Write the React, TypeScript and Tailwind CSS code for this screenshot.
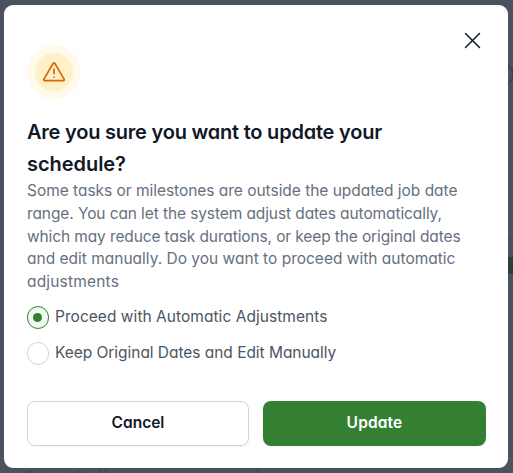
import { useState } from "react";

const TITLE = [
  { text: "Are you sure you want to update your", cls: "tracking-[-0.22px]" },
  { text: "schedule?", cls: "tracking-[-0.05px]" },
];

const MESSAGE = [
  { text: "Some tasks or milestones are outside the updated job date", cls: "tracking-[-0.03px]" },
  { text: "range. You can let the system adjust dates automatically,", cls: "tracking-[-0.1px]" },
  { text: "which may reduce task durations, or keep the original dates", cls: "tracking-[-0.12px]" },
  { text: "and edit manually. Do you want to proceed with automatic", cls: "tracking-[0px]" },
  { text: "adjustments", cls: "tracking-[0.18px]" },
];

const OPTIONS = [
  { id: "auto", label: "Proceed with Automatic Adjustments", cls: "pb-0.5 tracking-[0.04px]" },
  { id: "manual", label: "Keep Original Dates and Edit Manually", cls: "pb-0.5 tracking-[-0.04px]" },
];

function WarningBadge() {
  return (
    <div className="flex size-[54px] items-center justify-center rounded-full bg-[#fffaeb]">
      <div className="flex size-[38px] items-center justify-center rounded-full bg-[#fef0c7]">
        <svg width="22" height="20" viewBox="0 0 22 20" fill="none" stroke="#dc6803" strokeWidth="1.7" strokeLinecap="round" strokeLinejoin="round">
          <path d="M10.1 1.5.9 17.1a1 1 0 0 0 .9 1.6h18.4a1 1 0 0 0 .9-1.6L11.9 1.5a1 1 0 0 0-1.8 0Z" />
          <path d="M11 7v4.6M11 15v.1" />
        </svg>
      </div>
    </div>
  );
}

// dimmed page showing around the edges of the dialog
function Backdrop() {
  return (
    <div className="absolute inset-0 flex flex-col justify-between bg-[#4b525e]">
      <div className="flex justify-between">
        <div className="h-[37px] w-1 border-b border-[#404752]" />
        <div className="flex w-[5px] flex-col overflow-hidden">
          <div className="h-[37px] border-b border-[#404752]" />
          <div className="h-[15px] border-b border-[#404752]" />
          <div className="mt-[13px] -ml-4 h-[19px] w-[22px] rounded-lg border-2 border-[#3b424e]" />
          <div className="h-4 border-b border-[#404752]" />
          <div className="h-[139px] border-b border-[#404752]" />
          <div className="mt-[18px] h-[17px] bg-[#293f38]" />
          <div className="h-[19px] border-b border-[#404752]" />
        </div>
      </div>
      <div className="flex h-[5px] pl-[25px] text-[15px] leading-[18px] text-[#404650]">
        <span className="w-[232px]">Select Staff</span>
        <div className="w-px bg-[#383e49]" />
      </div>
    </div>
  );
}

export default function App() {
  const [choice, setChoice] = useState("auto");

  return (
    <div className="relative h-[473px] w-[513px] overflow-hidden px-1 pt-[5px] font-['Inter',sans-serif] [font-feature-settings:'cv11']">
      <Backdrop />

      <div role="dialog" className="relative h-[463px] w-[504px] rounded-[9px] bg-white pt-10 pr-[22px] pl-[23px]">
        <div className="flex items-start justify-between">
          <WarningBadge />
          <button aria-label="Close" className="-mt-[18px] p-[5px]">
            <svg width="17" height="17" viewBox="0 0 17 17" stroke="#111827" strokeWidth="1.5" strokeLinecap="round">
              <path d="M1.5 1.5l14 14M15.5 1.5l-14 14" />
            </svg>
          </button>
        </div>

        <h2 className="mt-[17px] text-[20px] leading-8 font-semibold whitespace-nowrap text-[#111827]">
          {TITLE.map((l) => (
            <span key={l.text} className="block">
              <span className={l.cls}>{l.text}</span>
            </span>
          ))}
        </h2>
        <p className="text-[15.5px] leading-[22.75px] whitespace-nowrap text-[#667080]">
          {MESSAGE.map((l) => (
            <span key={l.text} className="block">
              <span className={l.cls}>{l.text}</span>
            </span>
          ))}
        </p>

        <div className="mt-[12.25px] flex flex-col gap-[13px]">
          {OPTIONS.map((o) => (
            <button
              key={o.id}
              role="radio"
              aria-checked={choice === o.id}
              onClick={() => setChoice(o.id)}
              className="flex h-[23px] items-center gap-1.5 text-[15.5px] whitespace-nowrap text-[#4b5563]"
            >
              <span
                className={
                  choice === o.id
                    ? "flex h-[23px] w-[22px] items-center justify-center rounded-full border border-[#338033] bg-[#f2f9f2]"
                    : "h-[23px] w-[22px] rounded-full border border-[#d1d5db]"
                }
              >
                {choice === o.id && <span className="mr-px size-[9px] rounded-full bg-[#338033]" />}
              </span>
              <span className={o.cls}>{o.label}</span>
            </button>
          ))}
        </div>

        <div className="mt-9 flex gap-3.5 text-[15.5px] font-semibold">
          <button className="h-[45px] w-[222px] rounded-lg border border-[#d1d5db] pb-0.5 text-[#111827] shadow-xs">
            Cancel
          </button>
          <button className="h-[45px] flex-1 rounded-lg bg-[#338033] pb-0.5 tracking-[0.15px] text-white shadow-xs">
            Update
          </button>
        </div>
      </div>
    </div>
  );
}
